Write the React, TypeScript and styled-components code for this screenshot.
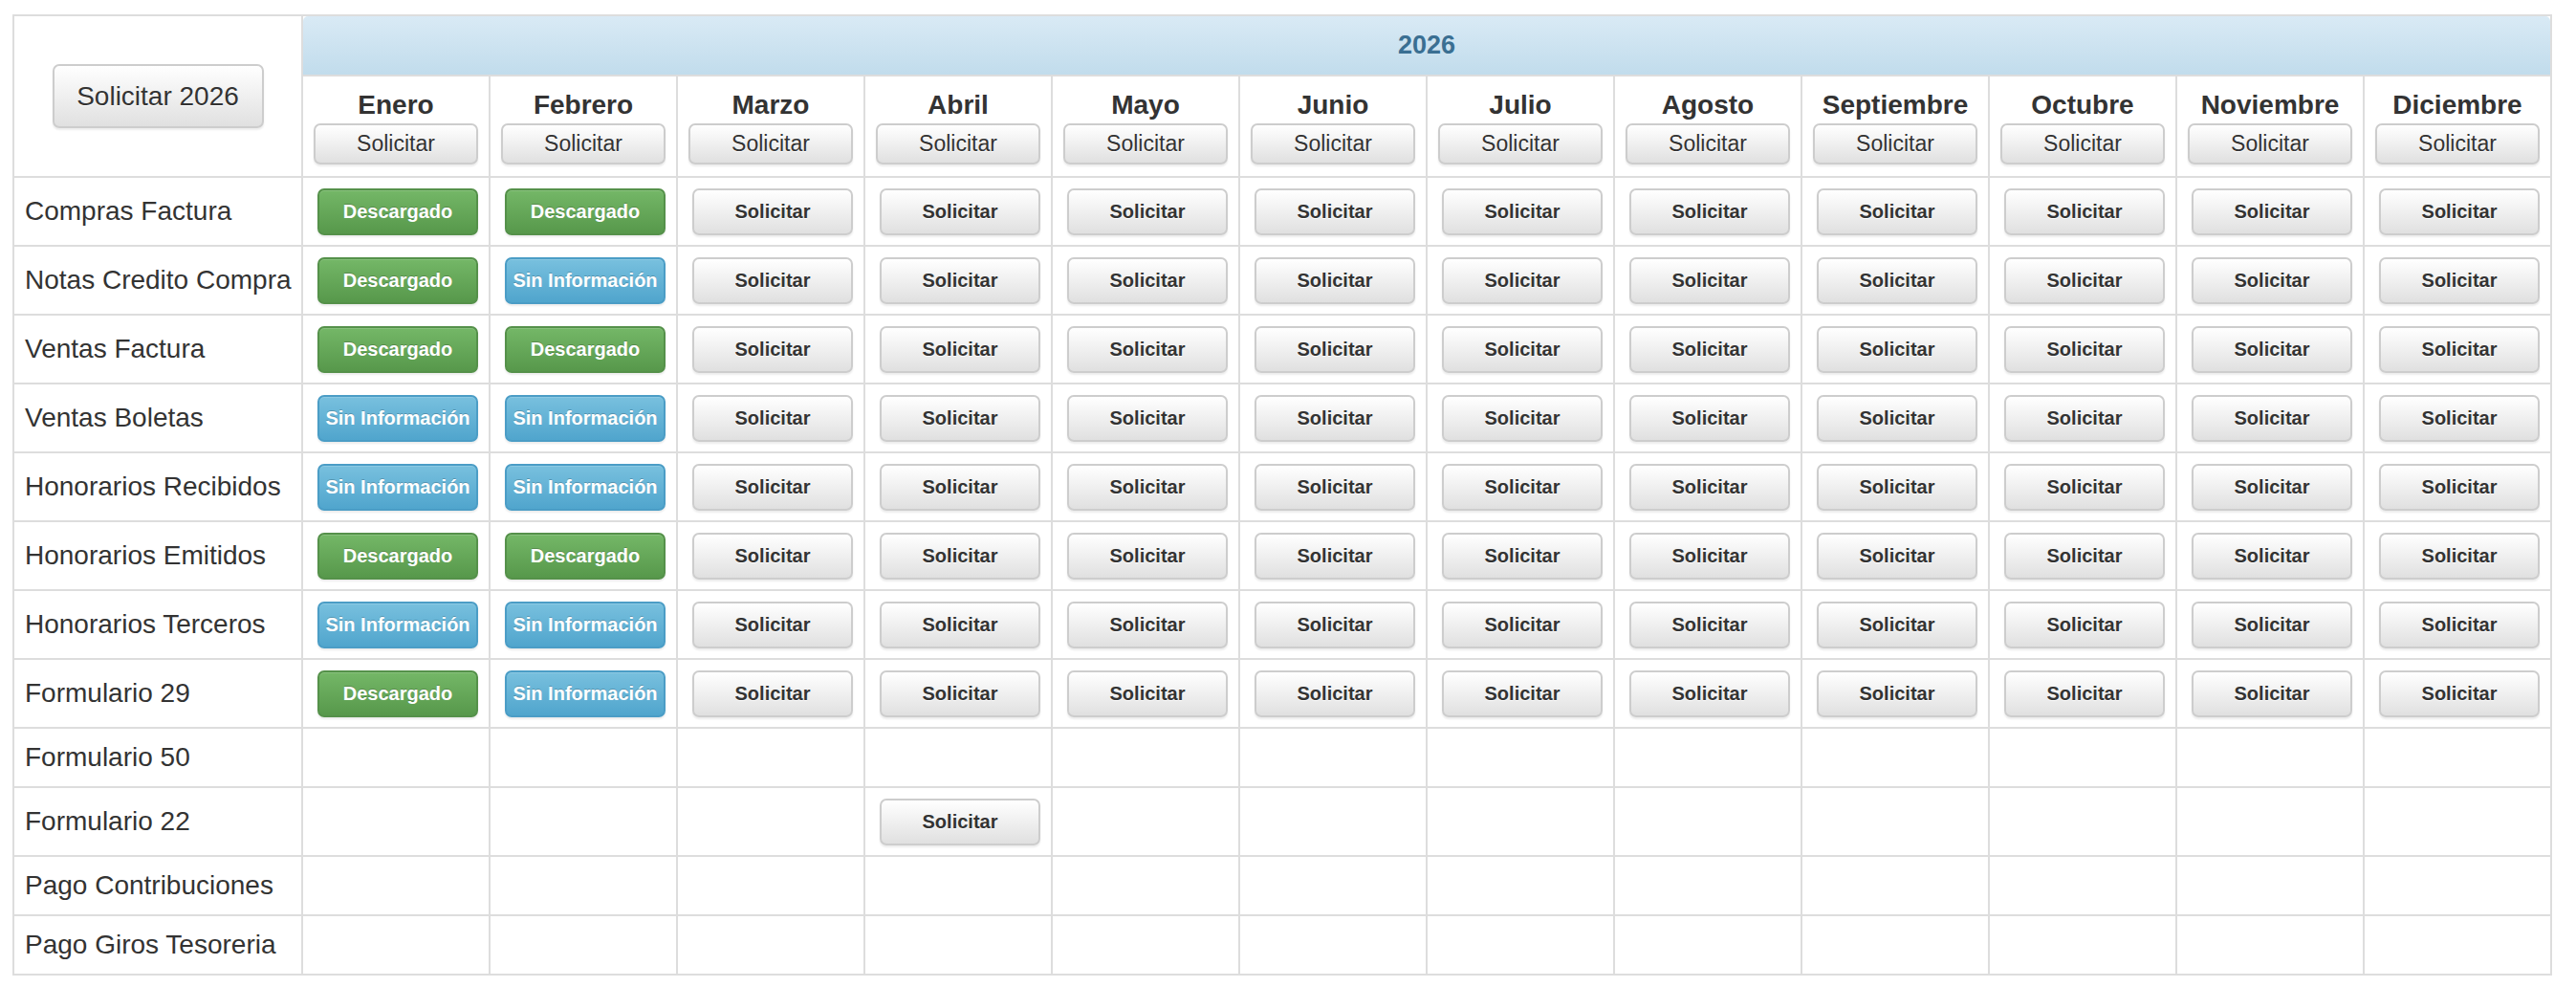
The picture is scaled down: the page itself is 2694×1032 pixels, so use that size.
import styled, { createGlobalStyle, css } from 'styled-components';

type Status = 'D' | 'I' | 'S' | null;
type Variant = 'default' | 'success' | 'info';

const MONTHS = [
  'Enero',
  'Febrero',
  'Marzo',
  'Abril',
  'Mayo',
  'Junio',
  'Julio',
  'Agosto',
  'Septiembre',
  'Octubre',
  'Noviembre',
  'Diciembre',
];

const fill = (first: Status[], rest: Status) =>
  [...first, ...Array(12 - first.length).fill(rest)] as Status[];

const ROWS: { label: string; cells: Status[] }[] = [
  { label: 'Compras Factura', cells: fill(['D', 'D'], 'S') },
  { label: 'Notas Credito Compra', cells: fill(['D', 'I'], 'S') },
  { label: 'Ventas Factura', cells: fill(['D', 'D'], 'S') },
  { label: 'Ventas Boletas', cells: fill(['I', 'I'], 'S') },
  { label: 'Honorarios Recibidos', cells: fill(['I', 'I'], 'S') },
  { label: 'Honorarios Emitidos', cells: fill(['D', 'D'], 'S') },
  { label: 'Honorarios Terceros', cells: fill(['I', 'I'], 'S') },
  { label: 'Formulario 29', cells: fill(['D', 'I'], 'S') },
  { label: 'Formulario 50', cells: fill([], null) },
  { label: 'Formulario 22', cells: fill([null, null, null, 'S'], null) },
  { label: 'Pago Contribuciones', cells: fill([], null) },
  { label: 'Pago Giros Tesoreria', cells: fill([], null) },
];

const LABELS: Record<Exclude<Status, null>, { text: string; variant: Variant }> = {
  D: { text: 'Descargado', variant: 'success' },
  I: { text: 'Sin Información', variant: 'info' },
  S: { text: 'Solicitar', variant: 'default' },
};

const GlobalStyle = createGlobalStyle`
  html, body {
    margin: 0;
    padding: 0;
    background: #fff;
  }

  body {
    font-family: "Liberation Sans", Arial, sans-serif;
    color: #333;
  }
`;

const Page = styled.div`
  padding: 15px 0 0 13px;
`;

const Grid = styled.table`
  width: 2654px;
  table-layout: fixed;
  border-collapse: collapse;
  border: 2px solid #ddd;
`;

const Row = styled.tr<{ $h: number }>`
  height: ${(p) => p.$h}px;
`;

const Cell = styled.td`
  border: 2px solid #ddd;
  padding: 0 11px 0 15px;
  vertical-align: middle;
`;

const LabelCell = styled.td`
  border: 2px solid #ddd;
  padding: 0 0 0 11px;
  vertical-align: middle;
  font-size: 28px;
  line-height: 36px;
  color: #333;
  white-space: nowrap;
`;

const CornerCell = styled.th`
  border: 2px solid #ddd;
  padding: 0;
  text-align: center;
  vertical-align: middle;
`;

const YearCell = styled.th`
  border: 2px solid #ddd;
  padding: 0;
  height: 61px;
`;

const YearBar = styled.div`
  height: 61px;
  border-radius: 5px 5px 0 0;
  background: linear-gradient(to bottom, #d9eaf5 0%, #c1dcec 100%);
  display: flex;
  align-items: center;
  justify-content: center;
  font-size: 27px;
  font-weight: bold;
  color: #3a6f92;
`;

const MonthCell = styled.th`
  border: 2px solid #ddd;
  padding: 12px 11px 10px 11px;
  vertical-align: top;
  text-align: center;
`;

const MonthName = styled.div`
  font-size: 28px;
  font-weight: bold;
  line-height: 36px;
  color: #333;
  margin-bottom: 1px;
`;

const variants = {
  default: css`
    background: linear-gradient(to bottom, #ffffff 0%, #e0e0e0 100%);
    border-color: #cdcdcd;
    color: #333;
    text-shadow: 0 1px 0 #fff;
  `,
  success: css`
    background: linear-gradient(to bottom, #74b767 0%, #57984b 100%);
    border-color: #55914a;
    color: #fff;
    text-shadow: 0 -1px 0 rgba(0, 0, 0, 0.2);
  `,
  info: css`
    background: linear-gradient(to bottom, #78c0de 0%, #50a5cd 100%);
    border-color: #4b9dc6;
    color: #fff;
    text-shadow: 0 -1px 0 rgba(0, 0, 0, 0.2);
  `,
};

const sizes = {
  cell: css`
    width: 100%;
    height: 49px;
    font-size: 20px;
    font-weight: bold;
  `,
  month: css`
    width: 100%;
    height: 43px;
    font-size: 23px;
    font-weight: normal;
  `,
  year: css`
    width: 221px;
    height: 67px;
    font-size: 28px;
    font-weight: normal;
  `,
};

const Button = styled.button<{ $variant: Variant; $size: keyof typeof sizes }>`
  display: block;
  margin: 0 auto;
  padding: 0;
  border: 2px solid;
  border-radius: 7px;
  font-family: "Liberation Sans", Arial, sans-serif;
  white-space: nowrap;
  cursor: pointer;
  box-shadow: inset 0 1px 0 rgba(255, 255, 255, 0.15), 0 2px 2px rgba(0, 0, 0, 0.08);
  ${(p) => variants[p.$variant]}
  ${(p) => sizes[p.$size]}
`;

export default function App() {
  return (
    <Page>
      <GlobalStyle />
      <Grid>
        <colgroup>
          <col style={{ width: 302 }} />
          {MONTHS.map((m) => (
            <col key={m} style={{ width: 196 }} />
          ))}
        </colgroup>
        <thead>
          <Row $h={63}>
            <CornerCell rowSpan={2}>
              <Button $variant='default' $size='year'>
                Solicitar 2026
              </Button>
            </CornerCell>
            <YearCell colSpan={12}>
              <YearBar>2026</YearBar>
            </YearCell>
          </Row>
          <Row $h={106}>
            {MONTHS.map((m) => (
              <MonthCell key={m}>
                <MonthName>{m}</MonthName>
                <Button $variant='default' $size='month'>
                  Solicitar
                </Button>
              </MonthCell>
            ))}
          </Row>
        </thead>
        <tbody>
          {ROWS.map((row) => {
            const hasButtons = row.cells.some((c) => c !== null);
            return (
              <Row key={row.label} $h={hasButtons ? 72 : 62}>
                <LabelCell>{row.label}</LabelCell>
                {row.cells.map((c, i) => (
                  <Cell key={i}>
                    {c && (
                      <Button $variant={LABELS[c].variant} $size='cell'>
                        {LABELS[c].text}
                      </Button>
                    )}
                  </Cell>
                ))}
              </Row>
            );
          })}
        </tbody>
      </Grid>
    </Page>
  );
}
